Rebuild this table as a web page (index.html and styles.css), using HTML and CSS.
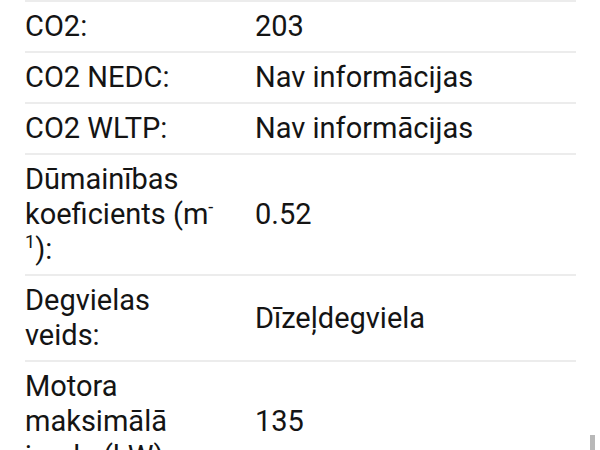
FILE: index.html
```html
<!DOCTYPE html>
<html lang="lv">
<head>
<meta charset="utf-8">
<link rel="stylesheet" href="styles.css">
</head>
<body>
<div class="list">
  <div class="row"><div class="label">CO2:</div><div class="value">203</div></div>
  <div class="row"><div class="label">CO2 NEDC:</div><div class="value">Nav informācijas</div></div>
  <div class="row"><div class="label">CO2 WLTP:</div><div class="value">Nav informācijas</div></div>
  <div class="row"><div class="label">Dūmainības koeficients (m<sup>-1</sup>):</div><div class="value">0.52</div></div>
  <div class="row"><div class="label">Degvielas veids:</div><div class="value">Dīzeļdegviela</div></div>
  <div class="row"><div class="label">Motora maksimālā jauda (kW):</div><div class="value">135</div></div>
</div>
<div class="scroll-thumb"></div>
</body>
</html>
```

FILE: styles.css
```css
html, body {
  margin: 0;
  padding: 0;
  height: 450px;
  overflow: hidden;
  background: #ffffff;
}
body {
  font-family: Roboto, "Noto Sans", sans-serif;
  font-size: 29px;
  line-height: 35px;
  color: #141414;
}
.list {
  margin: 0 24px 0 25px;
  border-top: 2px solid #ececec;
}
.row {
  display: flex;
  align-items: center;
  padding: 7px 0;
  border-bottom: 2px solid #ececec;
}
.label {
  width: 198px;
  padding-right: 32px;
  flex: none;
}
.value {
  flex: 1;
}
sup {
  font-size: 18px;
  line-height: 0;
  vertical-align: 11px;
}
.scroll-thumb {
  position: fixed;
  left: 590px;
  top: 435px;
  width: 5px;
  height: 15px;
  background: #b8b8b8;
}
```
